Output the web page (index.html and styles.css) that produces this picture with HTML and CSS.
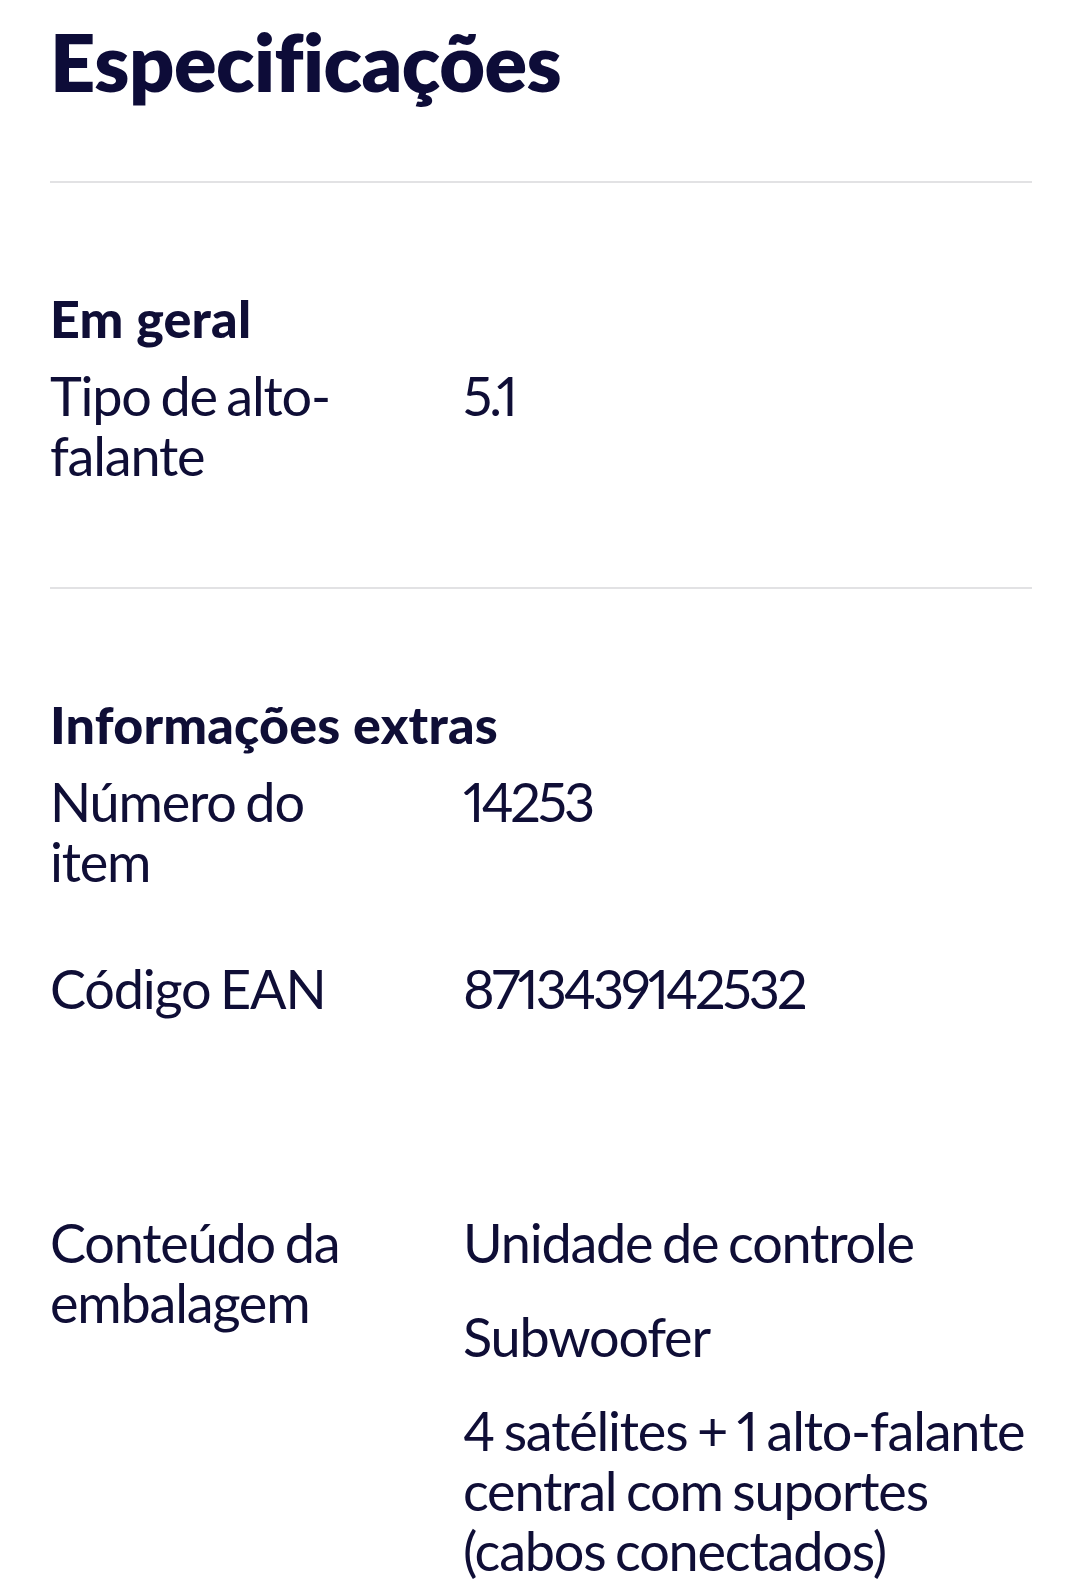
FILE: index.html
```html
<!DOCTYPE html>
<html lang="pt-BR">
<head>
<meta charset="utf-8">
<title>Especificações</title>
<link rel="stylesheet" href="styles.css">
</head>
<body>
<main class="specs">
  <h1 class="specs-title">Especificações</h1>

  <section class="group">
    <h2 class="group-title">Em geral</h2>
    <dl class="rows">
      <div class="row">
        <dt class="label">Tipo de alto-falante</dt>
        <dd class="value"><span class="item item-num">5.1</span></dd>
      </div>
    </dl>
  </section>

  <section class="group">
    <h2 class="group-title">Informações extras</h2>
    <dl class="rows">
      <div class="row">
        <dt class="label">Número do item</dt>
        <dd class="value"><span class="item item-num">14253</span></dd>
      </div>
      <div class="row">
        <dt class="label">Código EAN</dt>
        <dd class="value"><span class="item item-num">8713439142532</span></dd>
      </div>
      <div class="row row-blank">
        <dt class="label">&nbsp;</dt>
        <dd class="value"></dd>
      </div>
      <div class="row">
        <dt class="label">Conteúdo da embalagem</dt>
        <dd class="value">
          <span class="item">Unidade de controle</span>
          <span class="item">Subwoofer</span>
          <span class="item">4 satélites + 1 alto-falante<br>central com suportes<br>(cabos conectados)</span>
        </dd>
      </div>
    </dl>
  </section>
</main>
</body>
</html>
```

FILE: styles.css
```css
html, body {
  margin: 0;
  padding: 0;
  background: #ffffff;
}

body {
  font-family: "Lato", "Open Sans", sans-serif;
  color: #0f0e36;
}

.specs {
  padding: 15px 48px 0 50px;
}

.specs-title {
  margin: 0;
  font-size: 79px;
  line-height: 94px;
  font-weight: 800;
  color: #0d0c38;
  letter-spacing: -0.5px;
}

.group {
  border-top: 2px solid #e2e2e4;
  padding: 105px 0 101px;
}

.specs-title + .group {
  margin-top: 72px;
}

.group-title {
  margin: 0 0 18px;
  font-size: 52px;
  line-height: 60px;
  font-weight: 900;
  letter-spacing: 0.2px;
}

.rows {
  margin: 0;
  display: flex;
  flex-direction: column;
  gap: 67px;
}

.row {
  display: grid;
  grid-template-columns: 330px 1fr;
  column-gap: 83px;
}

.label,
.value {
  margin: 0;
  font-size: 54px;
  line-height: 60px;
  font-weight: 400;
  letter-spacing: -1.2px;
  word-spacing: -3px;
  font-variant-numeric: proportional-nums;
}

.value {
  display: flex;
  flex-direction: column;
  gap: 34px;
}

.item {
  white-space: nowrap;
}

.item-num {
  letter-spacing: -3px;
}

.row-blank .label {
  color: transparent;
}
```
